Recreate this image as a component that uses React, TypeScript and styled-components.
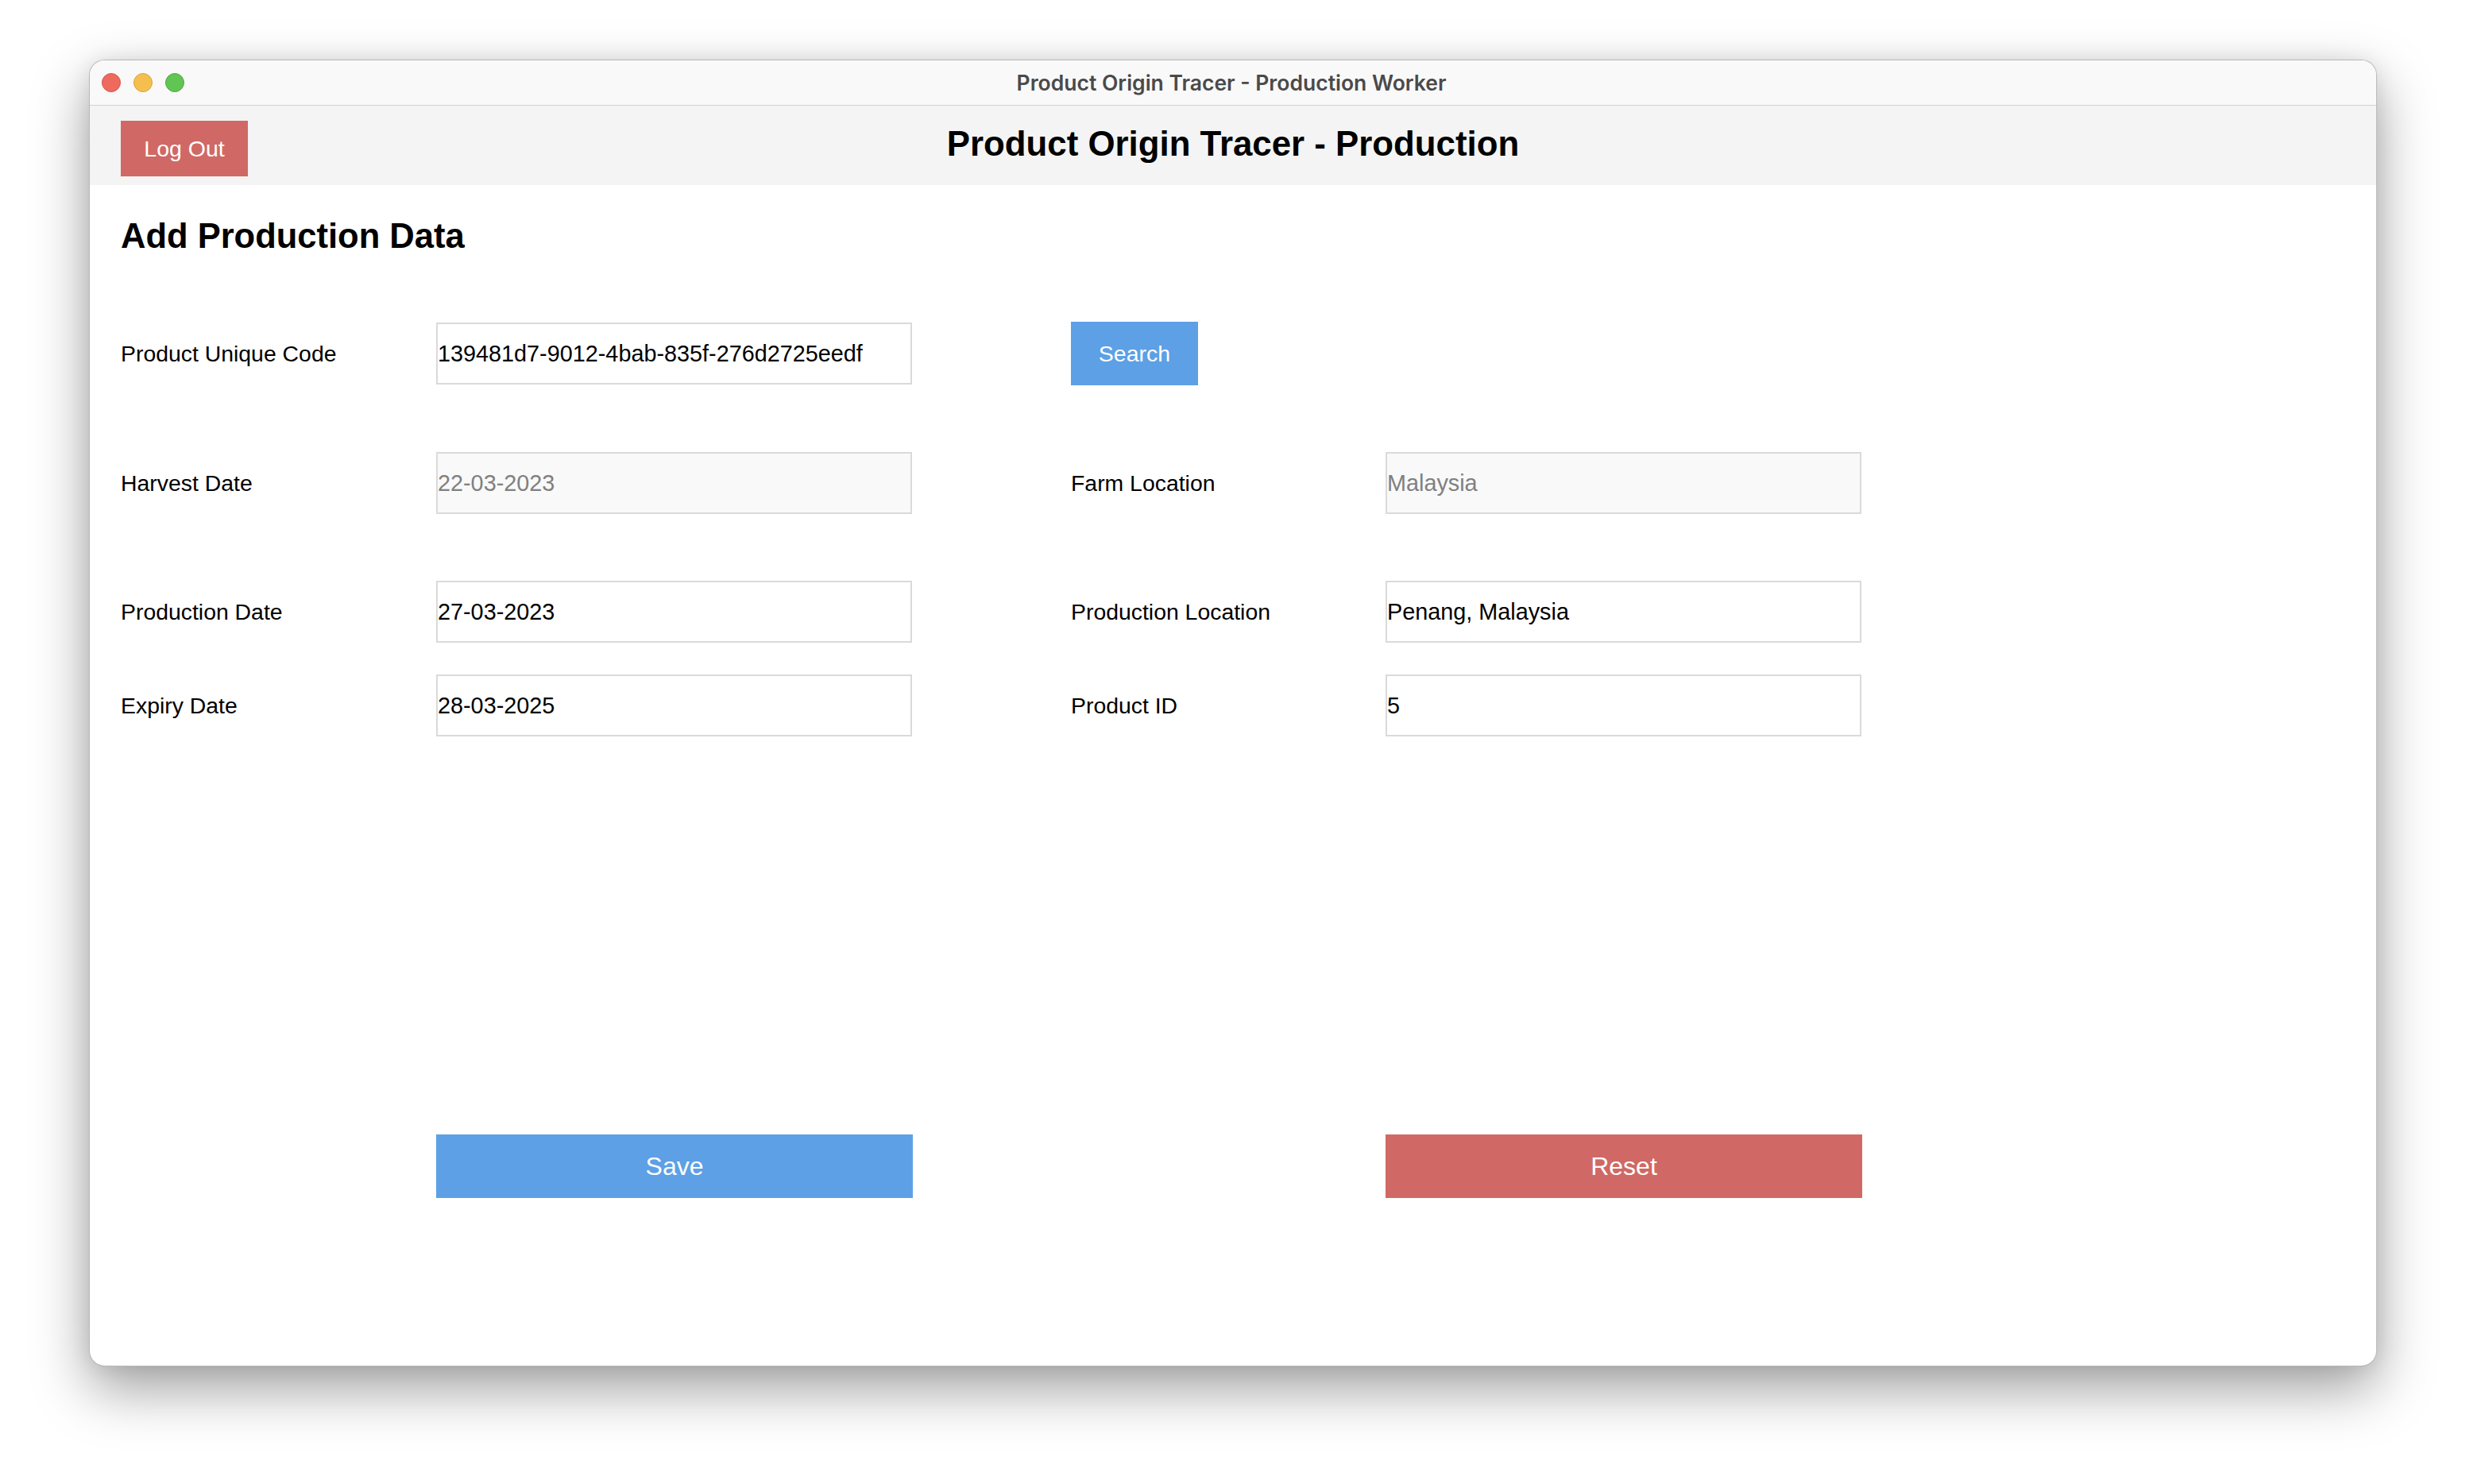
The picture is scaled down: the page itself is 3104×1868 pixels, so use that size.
import React from "react";
import styled, { createGlobalStyle } from "styled-components";

const GlobalStyle = createGlobalStyle`
  html, body { margin: 0; padding: 0; background: #ffffff; }
  body { font-family: "Liberation Sans", Arial, Helvetica, sans-serif; }
  * { box-sizing: border-box; }
`;

const Desktop = styled.div`
  width: 3104px;
  height: 1868px;
  padding: 75px 0 0 112px;
  background: #ffffff;
  overflow: hidden;
`;

const Window = styled.div`
  width: 2880px;
  height: 1645px;
  border-radius: 20px;
  background: #ffffff;
  border: 1px solid rgba(0, 0, 0, 0.28);
  box-shadow: 0 28px 70px rgba(0, 0, 0, 0.38), 0 0 24px rgba(0, 0, 0, 0.08);
  overflow: hidden;
  display: flex;
  flex-direction: column;
`;

const TitleBar = styled.div`
  flex: none;
  height: 57px;
  display: grid;
  grid-template-columns: 1fr auto 1fr;
  align-items: center;
  padding: 0 15px;
  background: #f9f9f9;
  border-bottom: 1px solid #d2d2d2;
`;

const Lights = styled.div`
  display: flex;
  gap: 16px;
`;

const Light = styled.span<{ $color: string; $edge: string }>`
  width: 24px;
  height: 24px;
  border-radius: 50%;
  background: ${(p) => p.$color};
  border: 1px solid ${(p) => p.$edge};
`;

const WindowTitle = styled.div`
  font-family: Inter, "Noto Sans", sans-serif;
  font-weight: 600;
  font-size: 26.5px;
  color: #4a4a4a;
  white-space: nowrap;
  margin-right: 4px;
`;

const Header = styled.header`
  flex: none;
  height: 100px;
  display: grid;
  grid-template-columns: 1fr auto 1fr;
  padding: 19px 39px 0;
  background: #f4f4f4;
`;

const AppTitle = styled.h1`
  margin: 0;
  align-self: center;
  margin-top: -23px;
  font-size: 43.8px;
  font-weight: 700;
  color: #000;
  white-space: nowrap;
`;

const Button = styled.button<{ $tone: "red" | "blue"; $big?: boolean; $tall?: boolean }>`
  height: ${(p) => (p.$big || p.$tall ? "80px" : "70px")};
  width: ${(p) => (p.$big ? "100%" : "160px")};
  padding: 0;
  border: none;
  border-radius: 0;
  background: ${(p) => (p.$tone === "red" ? "#d06965" : "#5da0e5")};
  color: #ffffff;
  font-family: "Liberation Sans", Arial, sans-serif;
  font-size: ${(p) => (p.$big ? "32px" : "28.5px")};
  cursor: pointer;
`;

const Main = styled.main`
  flex: 1;
  padding: 39px 39px 0;
`;

const Heading = styled.h2`
  margin: 0;
  font-size: 43.5px;
  line-height: 50px;
  font-weight: 700;
  color: #000;
`;

const Form = styled.div`
  margin-top: 83px;
`;

const Row = styled.div<{ $top: number }>`
  display: grid;
  grid-template-columns: 397px 600px 199px 396px 600px;
  align-items: center;
  height: 80px;
  margin-top: ${(p) => p.$top}px;
`;

const Label = styled.label<{ $col: number }>`
  grid-column: ${(p) => p.$col};
  font-size: 28.4px;
  color: #000;
  white-space: nowrap;
`;

const Field = styled.input<{ $col: number }>`
  grid-column: ${(p) => p.$col};
  width: 599px;
  height: 78px;
  padding: 0;
  border: 2px solid #dadada;
  border-radius: 0;
  background: #ffffff;
  font-family: "Liberation Sans", Arial, sans-serif;
  font-size: 28.8px;
  color: #000;
  outline: none;
  &:disabled {
    background: #f9f9f9;
    color: #808080;
    -webkit-text-fill-color: #808080;
    opacity: 1;
  }
`;

const Cell = styled.div<{ $col: number }>`
  grid-column: ${(p) => p.$col};
  display: flex;
`;

export default function App() {
  return (
    <>
      <GlobalStyle />
      <Desktop>
        <Window>
          <TitleBar>
            <Lights>
              <Light $color="#ee6a5f" $edge="#d5544a" />
              <Light $color="#f5bf4f" $edge="#d8a23c" />
              <Light $color="#61c554" $edge="#4ea843" />
            </Lights>
            <WindowTitle>Product Origin Tracer - Production Worker</WindowTitle>
            <span />
          </TitleBar>
          <Header>
            <div>
              <Button $tone="red">Log Out</Button>
            </div>
            <AppTitle>Product Origin Tracer - Production</AppTitle>
            <span />
          </Header>
          <Main>
            <Heading>Add Production Data</Heading>
            <Form>
              <Row $top={0}>
                <Label $col={1}>Product Unique Code</Label>
                <Field $col={2} defaultValue="139481d7-9012-4bab-835f-276d2725eedf" />
                <Cell $col={4}>
                  <Button $tone="blue" $tall>Search</Button>
                </Cell>
              </Row>
              <Row $top={83}>
                <Label $col={1}>Harvest Date</Label>
                <Field $col={2} defaultValue="22-03-2023" disabled />
                <Label $col={4}>Farm Location</Label>
                <Field $col={5} defaultValue="Malaysia" disabled />
              </Row>
              <Row $top={82}>
                <Label $col={1}>Production Date</Label>
                <Field $col={2} defaultValue="27-03-2023" />
                <Label $col={4}>Production Location</Label>
                <Field $col={5} defaultValue="Penang, Malaysia" />
              </Row>
              <Row $top={38}>
                <Label $col={1}>Expiry Date</Label>
                <Field $col={2} defaultValue="28-03-2025" />
                <Label $col={4}>Product ID</Label>
                <Field $col={5} defaultValue="5" />
              </Row>
              <Row $top={500}>
                <Cell $col={2}>
                  <Button $tone="blue" $big>Save</Button>
                </Cell>
                <Cell $col={5}>
                  <Button $tone="red" $big>Reset</Button>
                </Cell>
              </Row>
            </Form>
          </Main>
        </Window>
      </Desktop>
    </>
  );
}
